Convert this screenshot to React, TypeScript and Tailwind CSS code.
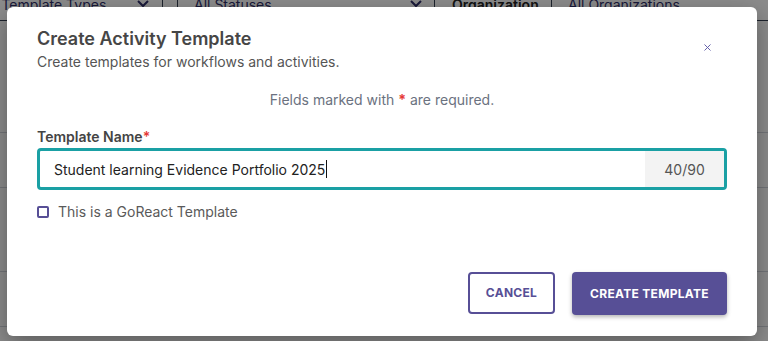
import { X } from 'lucide-react';

function Chevron() {
  return (
    <svg width="12" height="8" viewBox="0 0 12 8" fill="none">
      <path d="M1 1l5 5 5-5" stroke="currentColor" strokeWidth="2" />
    </svg>
  );
}

function BackgroundPage() {
  return (
    <div className="h-[341px] overflow-hidden bg-white font-['Inter',sans-serif]">
      {/* Filter bar, scrolled partly out of view */}
      <div className="-mt-[12px] flex h-[33px] items-center border-b border-gray-700 text-[14px]">
        <div className="relative flex h-full w-[162px] items-center overflow-hidden text-[#2f2f6a]">
          <span className="-ml-[19px] whitespace-nowrap">All Template Types</span>
          <span className="ml-auto mr-[13px]">
            <Chevron />
          </span>
        </div>
        <div className="h-full w-[16px] border-l border-r border-gray-700" />
        <div className="flex h-full w-[256px] items-center justify-between pl-[16px] pr-[12px] text-[#2f2f6a]">
          <span>All Statuses</span>
          <Chevron />
        </div>
        <div className="h-full border-l border-gray-700" />
        <span className="w-[116px] pl-[17px] font-semibold text-[#222]">Organization</span>
        <div className="h-[18px] border-l border-gray-700" />
        <span className="pl-[16px] text-[#2f2f6a]">All Organizations</span>
      </div>
      <div className="h-[111px]" />
      <div className="h-[55px] border-t border-gray-300" />
      <div className="h-[84px] border-t border-gray-300" />
      <div className="h-[55px] border-t border-gray-300" />
      <div className="border-t border-gray-300" />
    </div>
  );
}

export default function App() {
  return (
    <div className="relative h-[341px] w-[768px] overflow-hidden font-['Inter',sans-serif]">
      <BackgroundPage />

      {/* Overlay */}
      <div className="absolute inset-0 bg-black/45" />

      {/* Modal */}
      <div className="absolute left-[7px] top-[7px] flex h-[329px] w-[750px] flex-col rounded-[6px] bg-white pl-[30px] pr-[30px] pt-[20px] shadow-[0_8px_24px_rgba(0,0,0,0.35)]">
        <div className="flex items-start justify-between">
          <div>
            <h2 className="text-[18px] font-semibold leading-[23px] text-[#464646]">Create Activity Template</h2>
            <p className="mt-[2px] text-[14px] leading-[20px] text-[#555]">Create templates for workflows and activities.</p>
          </div>
          <button className="mr-[14px] mt-[15px] text-[#5a55a3]">
            <X className="h-[11px] w-[11px]" strokeWidth={2} />
          </button>
        </div>

        <p className="mt-[19px] text-center text-[14px] leading-[18px] text-[#6b7280]">
          Fields marked with <span className="font-bold text-[#e53935]">*</span> are required.
        </p>

        <label className="mt-[19px] text-[14px] font-semibold leading-[18px] text-[#444]">
          Template Name<span className="text-[#e53935]">*</span>
        </label>

        <div className="mt-[2px] flex h-[42px] items-stretch overflow-hidden rounded-[4px] border-[3px] border-[#1aa0a4]">
          <div className="flex flex-1 items-center pl-[14px] text-[14px] text-[#222]">
            Student learning Evidence Portfolio 2025
            <span className="ml-[1px] inline-block h-[18px] w-[1px] bg-[#111]" />
          </div>
          <div className="flex w-[79px] items-center justify-center bg-[#f3f3f3] text-[14px] text-[#555]">40/90</div>
        </div>

        <label className="mt-[11px] flex items-center gap-[9px] text-[14px] text-[#5a5a5a]">
          <span className="inline-block h-[12px] w-[12px] rounded-[2px] border-2 border-[#574f96]" />
          This is a GoReact Template
        </label>

        <div className="mt-auto mb-[21px] flex justify-end gap-[17px]">
          <button className="h-[42px] w-[87px] rounded-[4px] border-2 border-[#574f96] text-[12px] font-bold tracking-[0.3px] text-[#574f96]">
            CANCEL
          </button>
          <button className="h-[43px] w-[155px] rounded-[4px] bg-[#574f96] text-[12px] font-bold tracking-[0.3px] text-white shadow-[0_2px_4px_rgba(0,0,0,0.3)]">
            CREATE TEMPLATE
          </button>
        </div>
      </div>
    </div>
  );
}
